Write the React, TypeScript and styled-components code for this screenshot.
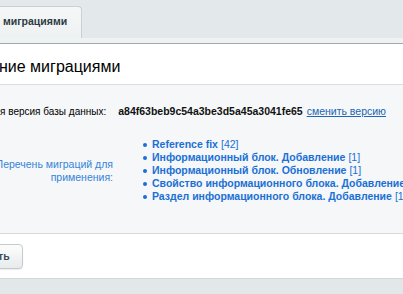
import React from 'react';
import styled, { createGlobalStyle } from 'styled-components';

const GlobalStyle = createGlobalStyle`
  html, body {
    margin: 0;
    padding: 0;
    width: 403px;
    height: 294px;
    overflow: hidden;
    background: #e2e8e9;
    font-family: "Liberation Sans", Arial, sans-serif;
    font-size: 10.5px;
  }
`;

const Page = styled.div`
  width: 403px;
  display: flex;
  flex-direction: column;
`;

const TabBar = styled.div`
  display: flex;
  align-items: flex-end;
  height: 38px;
  padding-top: 6px;
  box-sizing: border-box;
  background: #e3e9ea;
`;

const Tab = styled.div`
  height: 32px;
  margin-left: -12px;
  padding: 0 14px 3px 14px;
  display: flex;
  align-items: center;
  box-sizing: border-box;
  background: linear-gradient(#f6f7f7, #eef1f2);
  border: 1px solid #c9d1d3;
  border-bottom: none;
  border-top-right-radius: 4px;
  font-weight: bold;
  color: #2b3a44;
  white-space: nowrap;
`;

const TabUnderline = styled.div`
  height: 5px;
  background: #eef2f3;
  border-bottom: 1px solid #a1aaad;
`;

const Header = styled.div`
  height: 41px;
  background: #fff;
  border-bottom: 1px solid #d8dfe0;
  display: flex;
  align-items: center;
  padding-top: 6px;
  box-sizing: border-box;
`;

const Title = styled.h1`
  margin: 0 0 0 -1px;
  font-size: 16px;
  font-weight: normal;
  color: #000;
  white-space: nowrap;
`;

const Content = styled.div`
  height: 149px;
  box-sizing: border-box;
  padding-top: 20px;
  background: #f5f7f8;
  border-bottom: 1px solid #d5dbdc;
  display: flex;
  flex-direction: column;
  gap: 20px;
`;

const VersionRow = styled.div`
  display: flex;
  align-items: center;
  line-height: 13px;
  white-space: nowrap;
  color: #000;
`;

const VersionLabel = styled.span`
  margin-right: 12px;
  font-size: 10px;
`;

const Hash = styled.b`
  margin-right: 4px;
  color: #111;
`;

const ChangeLink = styled.a`
  color: #2066b3;
  text-decoration: underline;
`;

const MigrationRow = styled.div`
  display: flex;
  align-items: center;
  gap: 30px;
`;

const RowLabel = styled.div`
  width: 113px;
  flex: none;
  display: flex;
  flex-direction: column;
  align-items: flex-end;
  line-height: 13px;
  color: #3684da;
  white-space: nowrap;
`;

const MigrationList = styled.ul`
  margin: 0;
  padding: 0;
  list-style: none;
  line-height: 13px;
`;

const MigrationItem = styled.li`
  display: flex;
  align-items: center;
  white-space: nowrap;
  color: #1a70d6;
  font-weight: bold;

  &::before {
    content: '';
    width: 4px;
    height: 4px;
    border-radius: 50%;
    background: #1a70d6;
    margin-right: 5px;
    flex: none;
  }
`;

const Count = styled.span`
  font-weight: normal;
  margin-left: 3px;
`;

const Footer = styled.div`
  height: 45px;
  box-sizing: border-box;
  background: #fff;
  border-bottom: 1px solid #d3d9da;
  display: flex;
  align-items: center;
`;

const Button = styled.button`
  height: 25px;
  margin: 0 0 0 -17px;
  padding: 0 12px 0 14px;
  border: 1px solid #c3cbce;
  border-radius: 4px;
  background: linear-gradient(#fdfdfd, #e6ebec);
  box-shadow: 0 1px 1px rgba(0, 0, 0, 0.08);
  font-family: inherit;
  font-size: 10.5px;
  font-weight: bold;
  color: #3c4a53;
`;

const migrations = [
  { name: 'Reference fix', count: 42 },
  { name: 'Информационный блок. Добавление', count: 1 },
  { name: 'Информационный блок. Обновление', count: 1 },
  { name: 'Свойство информационного блока. Добавление', count: 1 },
  { name: 'Раздел информационного блока. Добавление', count: 1 },
];

export default function App() {
  return (
    <Page>
      <GlobalStyle />
      <TabBar>
        <Tab>миграциями</Tab>
      </TabBar>
      <TabUnderline />
      <Header>
        <Title>ние миграциями</Title>
      </Header>
      <Content>
        <VersionRow>
          <VersionLabel>я версия базы данных:</VersionLabel>
          <Hash>a84f63beb9c54a3be3d5a45a3041fe65</Hash>
          <ChangeLink href="#">сменить версию</ChangeLink>
        </VersionRow>
        <MigrationRow>
          <RowLabel>
            <span>Перечень миграций для</span>
            <span>применения:</span>
          </RowLabel>
          <MigrationList>
            {migrations.map((m) => (
              <MigrationItem key={m.name}>
                {m.name}
                <Count>[{m.count}]</Count>
              </MigrationItem>
            ))}
          </MigrationList>
        </MigrationRow>
      </Content>
      <Footer>
        <Button>ть</Button>
      </Footer>
    </Page>
  );
}
